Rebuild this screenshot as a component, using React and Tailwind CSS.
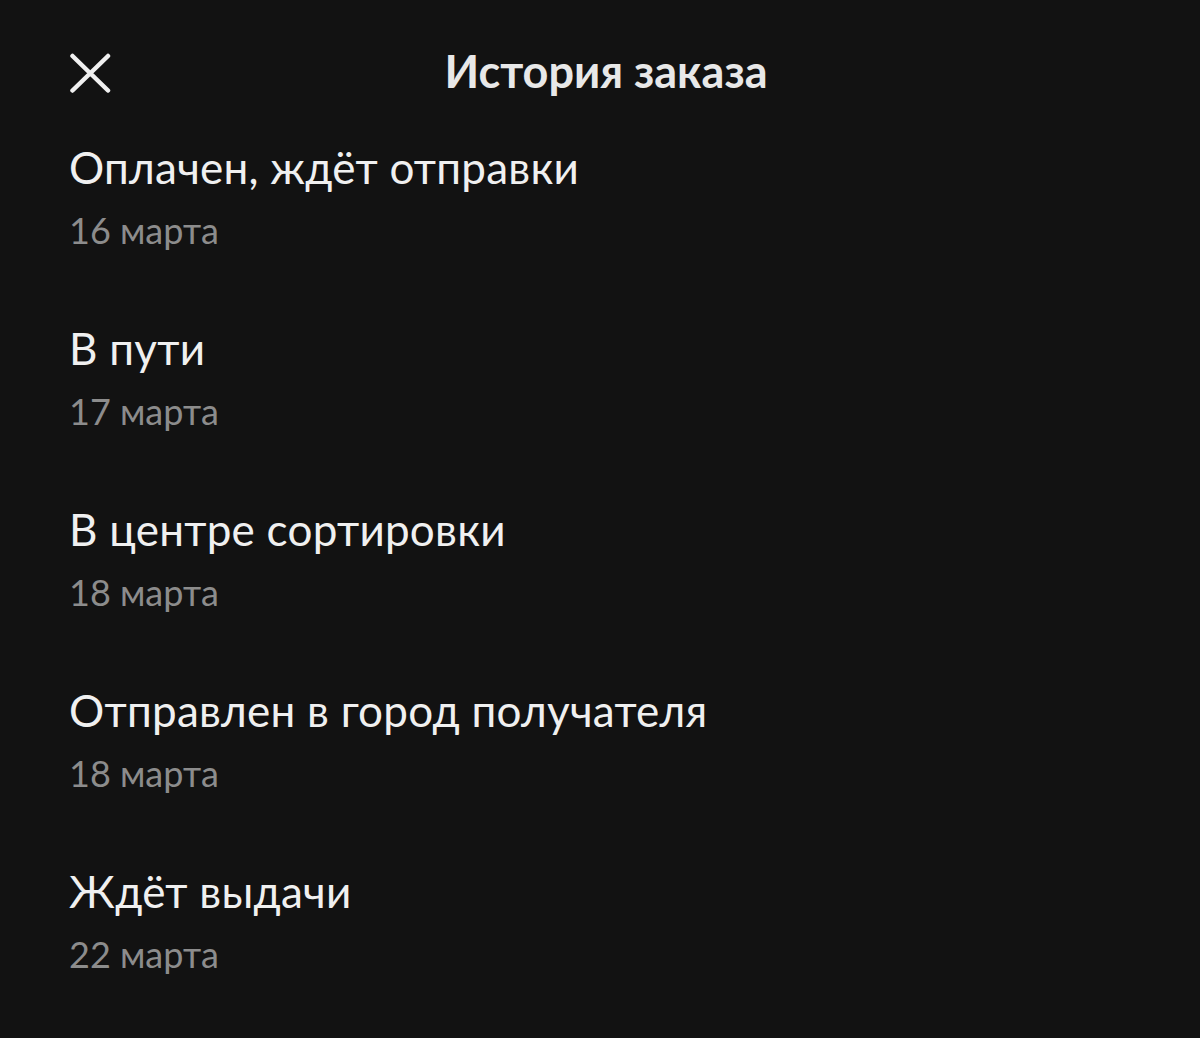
import React from "react";

const items = [
  ["Оплачен, ждёт отправки", "16 марта"],
  ["В пути", "17 марта"],
  ["В центре сортировки", "18 марта"],
  ["Отправлен в город получателя", "18 марта"],
  ["Ждёт выдачи", "22 марта"],
];

export default function App() {
  return (
    <div
      className="w-[1200px] h-[1038px] bg-[#121212] text-[#f0f0f0] overflow-hidden"
      style={{ fontFamily: "Lato, 'Noto Sans', sans-serif" }}
    >
      <div className="grid grid-cols-[1fr_auto_1fr] items-center h-[52px] mt-[45px] px-[69px]">
        <div className="flex items-center">
          <svg width="42" height="40" viewBox="0 0 42 40" fill="none" className="mt-[4px]">
            <path d="M3.5 3 L39 37.5 M39 3 L3.5 37.5" stroke="#f0f0f0" strokeWidth="4.5" strokeLinecap="round" />
          </svg>
        </div>
        <div className="text-[45px] leading-[52px] font-bold text-[#e8e8e8] pl-[12px]">История заказа</div>
        <div />
      </div>
      <div className="flex flex-col gap-[72px] mt-[44px] px-[69px]">
        {items.map(([t, d], i) => (
          <div key={i} className="flex flex-col gap-[17px]">
            <div className="text-[44px] leading-[52px] tracking-[0.25px]">{t}</div>
            <div className="text-[36px] leading-[40px] text-[#8c8c8c]">{d}</div>
          </div>
        ))}
      </div>
    </div>
  );
}
